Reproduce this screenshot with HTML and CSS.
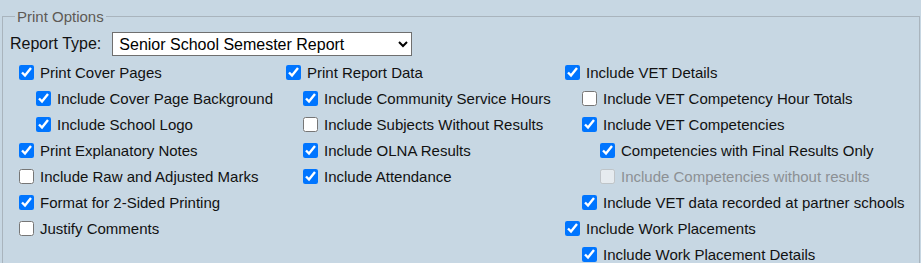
FILE: index.html
```html
<!DOCTYPE html>
<html lang="en">
<head>
  <meta charset="UTF-8">
  <meta name="viewport" content="width=device-width, initial-scale=1.0">
  <title>Print Options</title>
  <link rel="stylesheet" href="styles.css">
</head>
<body>
  <fieldset class="print-options">
    <legend>Print Options</legend>

    <div class="report-type">
      <label for="report-type">Report Type:</label>
      <select id="report-type">
        <option>Senior School Semester Report</option>
        <option>Middle School Semester Report</option>
      </select>
    </div>

    <div class="options">
      <div class="col">
        <label class="opt"><input type="checkbox" checked> Print Cover Pages</label>
        <label class="opt sub"><input type="checkbox" checked> Include Cover Page Background</label>
        <label class="opt sub"><input type="checkbox" checked> Include School Logo</label>
        <label class="opt"><input type="checkbox" checked> Print Explanatory Notes</label>
        <label class="opt"><input type="checkbox"> Include Raw and Adjusted Marks</label>
        <label class="opt"><input type="checkbox" checked> Format for 2-Sided Printing</label>
        <label class="opt"><input type="checkbox"> Justify Comments</label>
      </div>

      <div class="col">
        <label class="opt"><input type="checkbox" checked> Print Report Data</label>
        <label class="opt sub"><input type="checkbox" checked> Include Community Service Hours</label>
        <label class="opt sub"><input type="checkbox"> Include Subjects Without Results</label>
        <label class="opt sub"><input type="checkbox" checked> Include OLNA Results</label>
        <label class="opt sub"><input type="checkbox" checked> Include Attendance</label>
      </div>

      <div class="col">
        <label class="opt"><input type="checkbox" checked> Include VET Details</label>
        <label class="opt sub"><input type="checkbox"> Include VET Competency Hour Totals</label>
        <label class="opt sub"><input type="checkbox" checked> Include VET Competencies</label>
        <label class="opt sub2"><input type="checkbox" checked> Competencies with Final Results Only</label>
        <label class="opt sub2 disabled"><input type="checkbox" disabled> Include Competencies without results</label>
        <label class="opt sub"><input type="checkbox" checked> Include VET data recorded at partner schools</label>
        <label class="opt"><input type="checkbox" checked> Include Work Placements</label>
        <label class="opt sub"><input type="checkbox" checked> Include Work Placement Details</label>
      </div>
    </div>
  </fieldset>
</body>
</html>
```

FILE: styles.css
```css
:root {
  --fundo: #c7d7e3;
  --borda: #a9b4bd;
  --legenda: #5e5a55;
  --texto: #111;
}

* {
  box-sizing: border-box;
}

body {
  margin: 0;
  padding-top: 8px;
  background-color: var(--fundo);
  font-family: 'Liberation Sans', Arial, sans-serif;
  font-size: 15px;
  color: var(--texto);
}

.print-options {
  margin: 0 1px 0 2px;
  padding: 4px 7px 10px;
  border: 1px solid var(--borda);
}

.print-options legend {
  margin-left: 5px;
  padding: 0 2px;
  line-height: 17px;
  color: var(--legenda);
}

.report-type {
  display: flex;
  align-items: center;
  height: 30px;
  font-size: 16px;
}

.report-type label {
  margin-right: 11px;
}

.report-type select {
  width: 300px;
  height: 24px;
  padding: 0 2px;
  border: 1px solid #6f6f6f;
  border-radius: 0;
  background: #fff;
  font-family: inherit;
  font-size: 16px;
  color: #000;
}

.options {
  display: grid;
  grid-template-columns: 267px 279px 1fr;
  margin-left: 6px;
}

.col {
  display: flex;
  flex-direction: column;
}

.opt {
  display: flex;
  align-items: center;
  height: 26px;
  white-space: nowrap;
}

.opt input {
  width: 15px;
  height: 15px;
  margin: 0 6px 0 3px;
}

.opt.sub {
  padding-left: 17px;
}

.opt.sub2 {
  padding-left: 35px;
}

.opt.disabled {
  color: #8c9094;
}
```
